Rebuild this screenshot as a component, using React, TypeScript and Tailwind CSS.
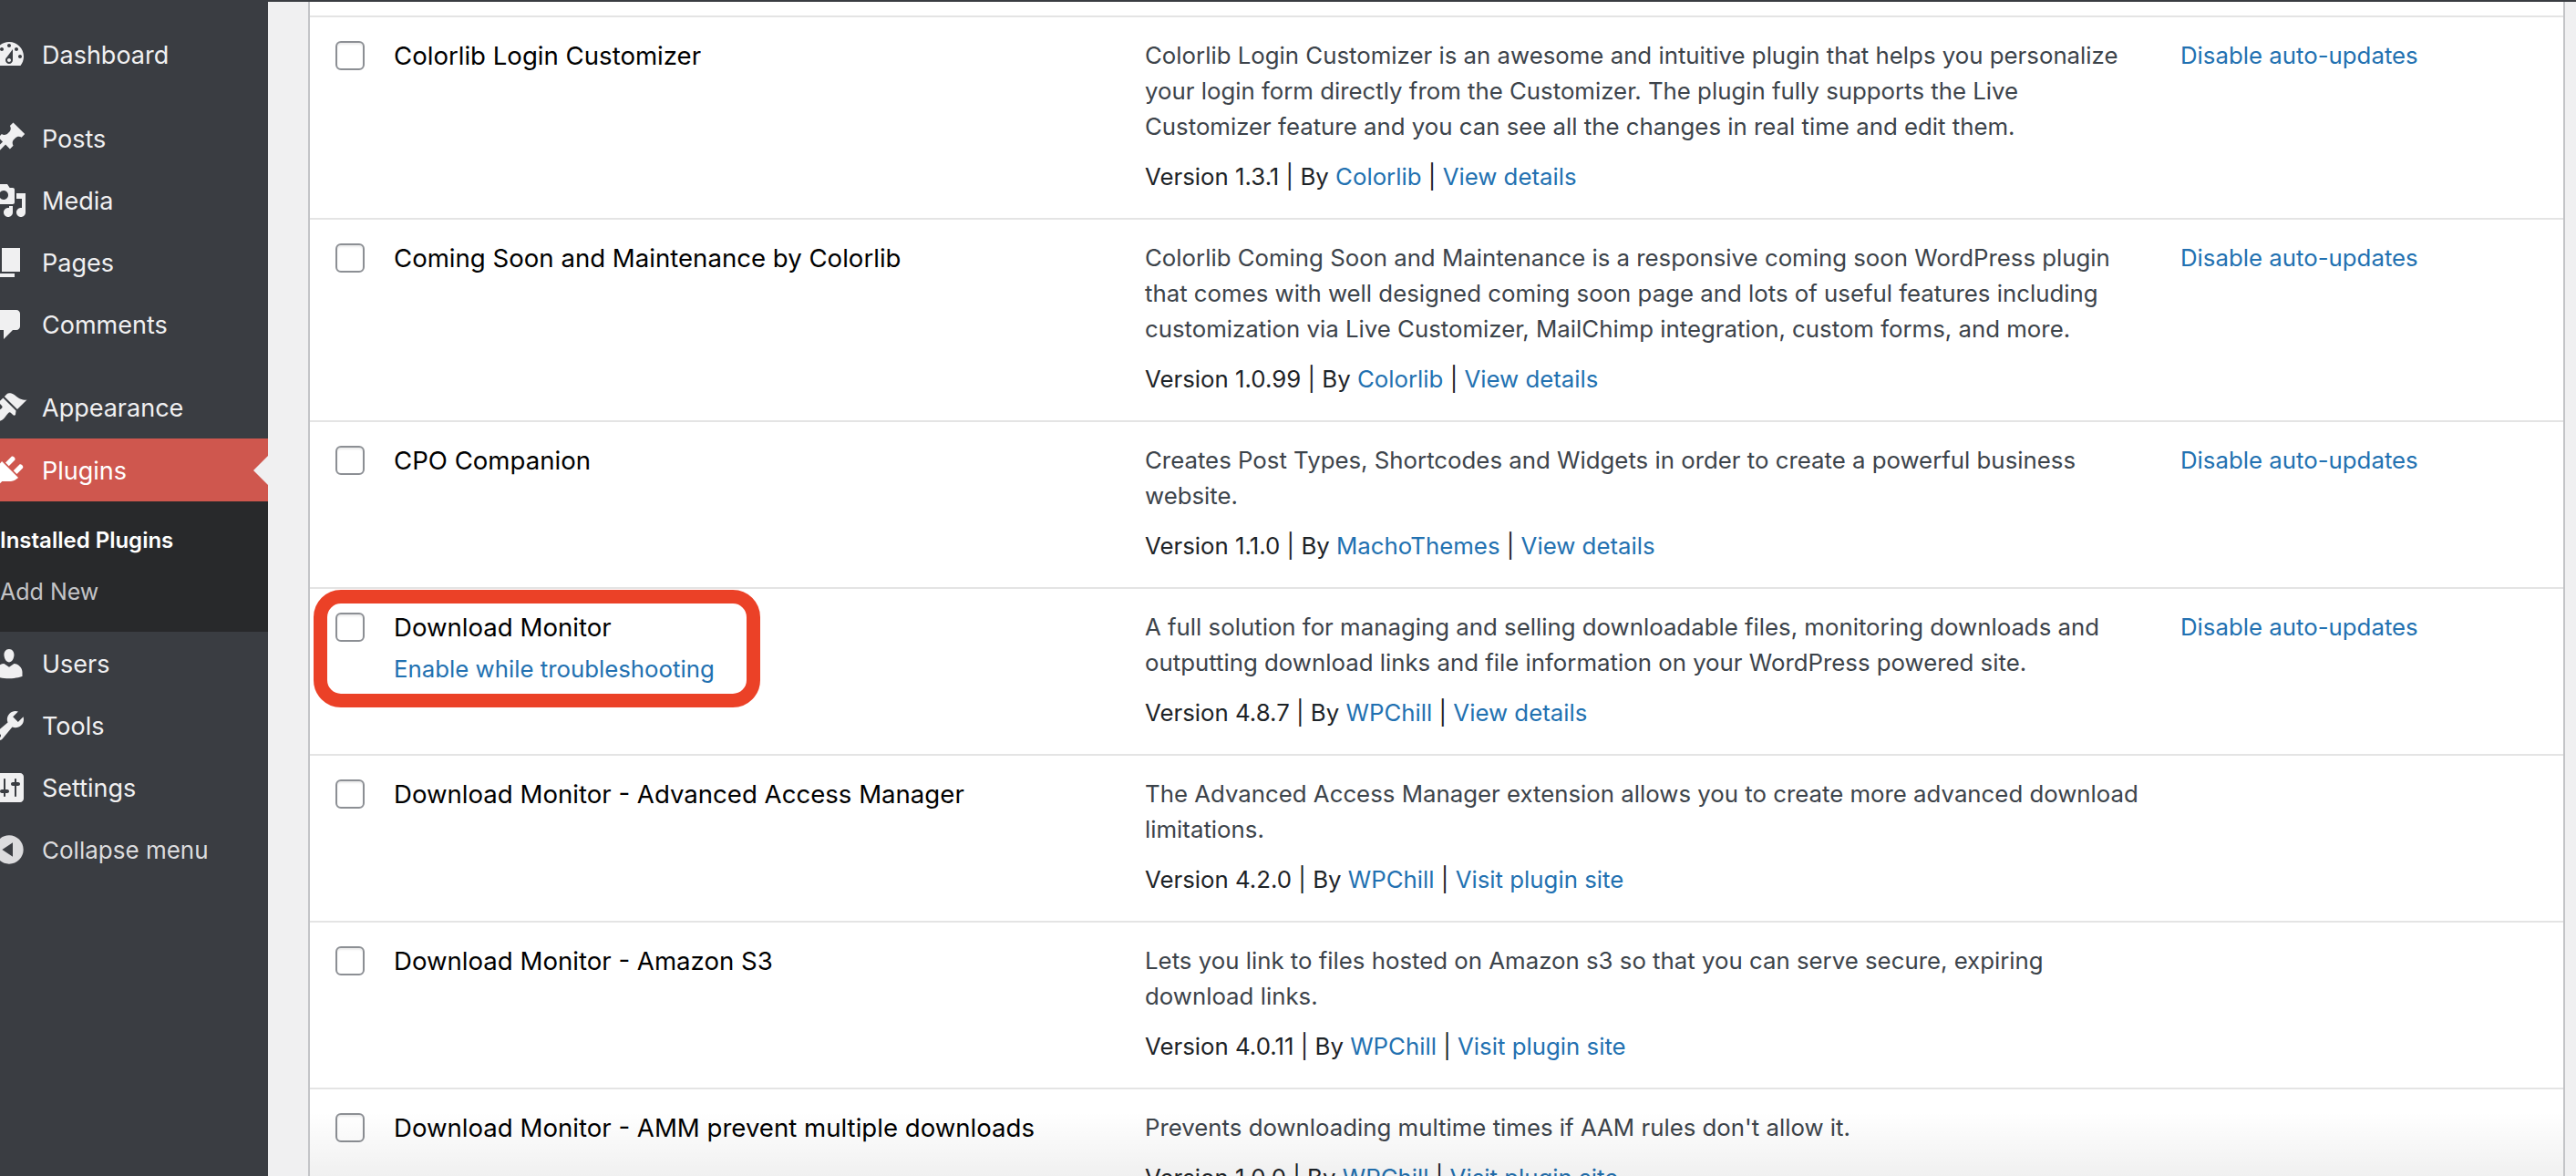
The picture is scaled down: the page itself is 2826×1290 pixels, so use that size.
const D = {
  dashboard: "M3.76 16h12.48c1.1-1.37 1.76-3.11 1.76-5 0-4.42-3.58-8-8-8s-8 3.58-8 8c0 1.89.66 3.63 1.76 5zM10 4c.55 0 1 .45 1 1s-.45 1-1 1-1-.45-1-1 .45-1 1-1zM6 6c.55 0 1 .45 1 1s-.45 1-1 1-1-.45-1-1 .45-1 1-1zm8 0c.55 0 1 .45 1 1s-.45 1-1 1-1-.45-1-1 .45-1 1-1zm-5.37 5.55L12 7v6c0 1.1-.9 2-2 2s-2-.9-2-2c0-.57.24-1.08.63-1.45zM4 10c.55 0 1 .45 1 1s-.45 1-1 1-1-.45-1-1 .45-1 1-1zm12 0c.55 0 1 .45 1 1s-.45 1-1 1-1-.45-1-1 .45-1 1-1zm-5 3c0-.55-.45-1-1-1s-1 .45-1 1 .45 1 1 1 1-.45 1-1z",
  post: "M10.44 3.02l1.82-1.82 6.36 6.35-1.83 1.82c-1.05-.68-2.48-.57-3.41.36l-.75.75c-.92.93-1.04 2.35-.35 3.41l-1.83 1.82-2.41-2.41-2.8 2.79c-.42.42-3.38 2.71-3.8 2.29s1.86-3.39 2.28-3.81l2.79-2.79L4.1 9.36l1.83-1.82c1.05.69 2.48.57 3.4-.36l.75-.75c.93-.92 1.05-2.35.36-3.41z",
  media: "M13 11V4c0-.55-.45-1-1-1h-1.67L9 1H5L3.67 3H2c-.55 0-1 .45-1 1v7c0 .55.45 1 1 1h10c.55 0 1-.45 1-1zM7 4.5c1.38 0 2.5 1.12 2.5 2.5S8.38 9.5 7 9.5 4.5 8.38 4.5 7 5.62 4.5 7 4.5zM14 6h5v10.5c0 1.38-1.12 2.5-2.5 2.5S14 17.88 14 16.5s1.12-2.5 2.5-2.5c.17 0 .34.02.5.05V9h-3V6zm-4 8.05V13h2v3.5c0 1.38-1.12 2.5-2.5 2.5S7 17.88 7 16.5 8.12 14 9.5 14c.17 0 .34.02.5.05z",
  page: "M6 15V2h10v13H6zm-1 1h8v2H3V5h2v11z",
  comments: "M5 2h9c1.1 0 2 .9 2 2v7c0 1.1-.9 2-2 2h-2l-5 5v-5H5c-1.1 0-2-.9-2-2V4c0-1.1.9-2 2-2z",
  appearance: "M14.48 11.06L7.41 3.99l1.5-1.5c.5-.56 2.3-.47 3.51.32 1.21.8 1.43 1.28 2.91 2.1 1.18.64 2.45 1.26 4.45.85zm-.71.71L6.7 4.7 4.93 6.47c-.39.39-.39 1.02 0 1.41l1.06 1.06c.39.39.39 1.03 0 1.42-.6.6-1.43 1.11-2.21 1.69-.35.26-.7.53-1.01.84C1.43 13.23.91 15.95 1.95 17c1.05 1.05 3.77.53 5.11-.82.31-.31.58-.66.84-1.01.58-.78 1.09-1.61 1.69-2.21.39-.39 1.03-.39 1.42 0l1.06 1.06c.39.39 1.02.39 1.41 0z",
  plugins: "M13.11 4.36L9.87 7.6 8 5.73l3.24-3.24c.35-.34 1.05-.2 1.56.32.52.51.66 1.21.31 1.55zm-8 1.77l.91-1.12 9.01 9.01-1.19.84c-.71.71-2.63 1.16-3.82 1.16H6.14L4.9 17.26c-.59.59-1.54.59-2.12 0-.59-.58-.59-1.53 0-2.12l1.24-1.24v-3.88c0-1.13.4-3.19 1.09-3.89zm7.26 3.97l3.24-3.24c.34-.35 1.04-.21 1.55.31.52.51.66 1.21.31 1.55l-3.24 3.25z",
  users: "M10 9.25c-2.27 0-2.73-3.44-2.73-3.44C7 4.02 7.82 2 9.97 2c2.16 0 2.98 2.02 2.71 3.81 0 0-.41 3.44-2.68 3.44zm0 2.57L12.72 10c2.39 0 4.52 2.33 4.52 4.53v2.49s-3.65 1.13-7.24 1.13c-3.65 0-7.24-1.13-7.24-1.13v-2.49c0-2.25 1.94-4.48 4.47-4.48z",
  tools: "M16.68 9.77c-1.34 1.34-3.3 1.67-4.95.99l-5.41 6.52c-.99.99-2.59.99-3.58 0s-.99-2.59 0-3.57l6.52-5.42c-.68-1.65-.35-3.61.99-4.95 1.28-1.28 3.12-1.62 4.72-1.06l-2.89 2.89 2.82 2.82 2.86-2.87c.53 1.58.18 3.39-1.08 4.65zM3.81 16.21c.4.39 1.04.39 1.43 0 .4-.4.4-1.04 0-1.43-.39-.4-1.03-.4-1.43 0-.39.39-.39 1.03 0 1.43z",
  settings: "M18 16V4c0-1.1-.9-2-2-2H4c-1.1 0-2 .9-2 2v12c0 1.1.9 2 2 2h12c1.1 0 2-.9 2-2zM8 11h1c.55 0 1 .45 1 1s-.45 1-1 1H8v1.5c0 .28-.22.5-.5.5s-.5-.22-.5-.5V13H6c-.55 0-1-.45-1-1s.45-1 1-1h1V5.5c0-.28.22-.5.5-.5s.5.22.5.5V11zm5-2h-1c-.55 0-1-.45-1-1s.45-1 1-1h1V5.5c0-.28.22-.5.5-.5s.5.22.5.5V7h1c.55 0 1 .45 1 1s-.45 1-1 1h-1v5.5c0 .28-.22.5-.5.5s-.5-.22-.5-.5V9z",
  collapse: "M10 2.16c4.33 0 7.84 3.51 7.84 7.84s-3.51 7.84-7.84 7.84S2.16 14.33 2.16 10 5.71 2.16 10 2.16zm2 11.72V6.12L6.18 9.97z",
};

function Item({ icon, label, active, dim, cls = "" }: { icon: string; label: string; active?: boolean; dim?: boolean; cls?: string }) {
  return (
    <div className={`relative flex h-[68px] shrink-0 items-center pl-[46px] ${active ? "bg-[#cf574e] text-white" : dim ? "text-[26px] text-[#dcdcde]" : "text-[#f0f0f1]"} ${cls}`}>
      <svg viewBox="0 0 20 20" className="absolute left-[-10px] top-1/2 h-[40px] w-[40px] -translate-y-1/2" fill="currentColor">
        <path d={icon} />
      </svg>
      <span className="pt-[2px]">{label}</span>
      {active && (
        <span className="absolute right-0 top-1/2 h-0 w-0 -translate-y-1/2 border-y-[16px] border-r-[16px] border-y-transparent border-r-[#f0f0f1]" />
      )}
    </div>
  );
}

type Row = { name: string; action?: string; desc: string[]; version: string; by: string; link: string; auto?: boolean };
const rows: Row[] = [
  { name: "Colorlib Login Customizer", auto: true, desc: ["Colorlib Login Customizer is an awesome and intuitive plugin that helps you personalize", "your login form directly from the Customizer. The plugin fully supports the Live", "Customizer feature and you can see all the changes in real time and edit them."], version: "1.3.1", by: "Colorlib", link: "View details" },
  { name: "Coming Soon and Maintenance by Colorlib", auto: true, desc: ["Colorlib Coming Soon and Maintenance is a responsive coming soon WordPress plugin", "that comes with well designed coming soon page and lots of useful features including", "customization via Live Customizer, MailChimp integration, custom forms, and more."], version: "1.0.99", by: "Colorlib", link: "View details" },
  { name: "CPO Companion", auto: true, desc: ["Creates Post Types, Shortcodes and Widgets in order to create a powerful business", "website."], version: "1.1.0", by: "MachoThemes", link: "View details" },
  { name: "Download Monitor", action: "Enable while troubleshooting", auto: true, desc: ["A full solution for managing and selling downloadable files, monitoring downloads and", "outputting download links and file information on your WordPress powered site."], version: "4.8.7", by: "WPChill", link: "View details" },
  { name: "Download Monitor - Advanced Access Manager", desc: ["The Advanced Access Manager extension allows you to create more advanced download", "limitations."], version: "4.2.0", by: "WPChill", link: "Visit plugin site" },
  { name: "Download Monitor - Amazon S3", desc: ["Lets you link to files hosted on Amazon s3 so that you can serve secure, expiring", "download links."], version: "4.0.11", by: "WPChill", link: "Visit plugin site" },
  { name: "Download Monitor - AMM prevent multiple downloads", desc: ["Prevents downloading multime times if AAM rules don't allow it."], version: "1.0.0", by: "WPChill", link: "Visit plugin site" },
];

function PluginRow({ r }: { r: Row }) {
  return (
    <div className="flex border-b-2 border-[#e4e4e4] pb-[26px] pl-[28px] pt-[22px]">
      <div className="w-[64px] shrink-0 pt-[4px]">
        <div className="h-[32px] w-[32px] rounded-[6px] border-2 border-[#8c8f94] bg-white shadow-[inset_0_2px_2px_rgba(0,0,0,0.08)]" />
      </div>
      <div className="w-[824px] shrink-0 pt-[3px] text-black">
        <div className="h-[39px] text-[27.6px] leading-[34px]">{r.name}</div>
        {r.action && <div className="mt-[4px] text-[#2271b1]">{r.action}</div>}
      </div>
      <div className="w-[1136px] shrink-0">
        <div className="text-[#3c434a]">
          {r.desc.map((l) => (
            <div key={l} className="whitespace-nowrap">{l}</div>
          ))}
        </div>
        <div className="mt-[16px] whitespace-nowrap text-[#1d2327]">
          Version {r.version} | By <span className="text-[#2271b1]">{r.by}</span> | <span className="text-[#2271b1]">{r.link}</span>
        </div>
      </div>
      {r.auto && <div className="whitespace-nowrap text-[#2271b1]">Disable auto-updates</div>}
    </div>
  );
}

export default function App() {
  return (
    <div className="relative flex h-[1290px] w-[2826px] overflow-hidden bg-[#f0f0f1] font-['Inter',sans-serif] text-[25.8px] leading-[39px]">
      <aside className="flex w-[294px] shrink-0 flex-col overflow-hidden bg-[#3a3d42] pt-[26px] text-[27px] leading-[34px]">
        <Item icon={D.dashboard} label="Dashboard" cls="mb-[24px]" />
        <Item icon={D.post} label="Posts" />
        <Item icon={D.media} label="Media" />
        <Item icon={D.page} label="Pages" />
        <Item icon={D.comments} label="Comments" cls="mb-[23px]" />
        <Item icon={D.appearance} label="Appearance" />
        <Item icon={D.plugins} label="Plugins" active cls="!h-[69px]" />
        <div className="flex h-[143px] shrink-0 flex-col bg-[#28292b] pt-[15px] leading-[56px]">
          <span className="text-[24px] font-semibold text-white">Installed Plugins</span>
          <span className="text-[25px] text-[#c3c4c7]">Add New</span>
        </div>
        <Item icon={D.users} label="Users" cls="mt-[1px]" />
        <Item icon={D.tools} label="Tools" />
        <Item icon={D.settings} label="Settings" />
        <Item icon={D.collapse} label="Collapse menu" dim />
      </aside>
      <main className="flex min-w-0 flex-1 flex-col">
        <div className="h-[2px] shrink-0 bg-[#3a3d42]" />
        <div className="relative ml-[44px] mr-[12px] flex-1 overflow-hidden border-x-2 border-[#c3c4c7] bg-white pt-[15px]">
          <div className="border-b-2 border-[#e4e4e4]" />
          {rows.map((r) => (
            <PluginRow key={r.name} r={r} />
          ))}
          <div className="pointer-events-none absolute bottom-0 left-0 right-0 h-[70px] bg-gradient-to-b from-transparent to-[rgba(0,0,0,0.06)]" />
        </div>
      </main>
      <div className="absolute left-[344px] top-[647px] h-[129px] w-[490px] rounded-[30px] border-[15px] border-[#eb4127]" />
    </div>
  );
}
